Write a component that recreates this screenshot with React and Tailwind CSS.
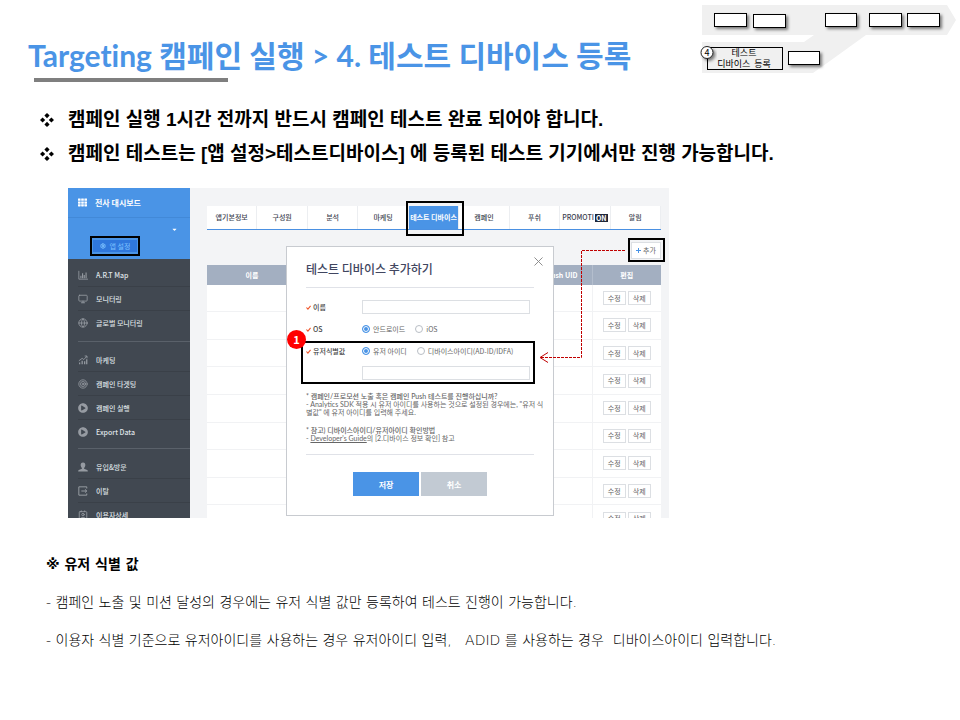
import React from "react";
import { Contact, Globe, Monitor, Settings, Target, X } from "lucide-react";
import { FaPlayCircle, FaTh, FaCaretDown } from "react-icons/fa";

const NODES = [
  [14, 13, 33],
  [53, 14, 33],
  [125, 13, 32],
  [169, 13, 33],
  [207, 13, 33],
  [88, 51, 32],
];

function ProcessMap() {
  return (
    <svg width="260" height="84" viewBox="0 0 260 84" className="shrink-0" role="img" aria-label="진행 단계">
      <defs>
        <filter id="shade" x="-20%" y="-20%" width="150%" height="180%">
          <feDropShadow dx="2" dy="2" stdDeviation="1.500" floodOpacity="0.5" />
        </filter>
      </defs>
      <path d="M2 5H247L256 20L247 35H166L123 66L113 73H2V42H104L114 35H2Z" fill="#f0f0f0" />
      {NODES.map(([x, y, w]) => (
        <rect key={x} x={x + 0.5} y={y + 0.5} width={w - 1} height="13" fill="#fff" stroke="#000" filter="url(#shade)" />
      ))}
      <rect x="7.5" y="47.5" width="75" height="22" fill="#f0f0f0" stroke="#000" />
      <g className="font-['Noto_Sans_CJK_KR',sans-serif]" fontSize="9" textAnchor="middle">
        <text x="44" y="56">테스트</text>
        <text x="44" y="67">디바이스&#160; 등록</text>
      </g>
      <circle cx="7" cy="52.5" r="6" fill="#fff" stroke="#222" filter="url(#shade)" />
      <text x="7" y="56" fontSize="9" textAnchor="middle" className="font-['Noto_Sans_CJK_KR',sans-serif]">4</text>
    </svg>
  );
}

function GrowthIcon({ className }) {
  return (
    <svg viewBox="0 0 12 12" className={className} fill="none" stroke="currentColor">
      <path d="M2 11V9M5 11V7M8 11V7.500M10.500 11V5" strokeWidth="1.500" />
      <path d="M1 7L5 4L7 5.500L10.500 1.500M8 1.200H10.800V4" />
    </svg>
  );
}

function AxisChartIcon({ className }) {
  return (
    <svg viewBox="0 0 12 12" className={className} fill="none" stroke="currentColor">
      <path d="M1 1V11H12" />
      <path d="M3.500 10V7M5.500 10V4M7.500 10V6M9.700 10V3" strokeWidth="1.300" />
    </svg>
  );
}

function PersonIcon({ className }) {
  return (
    <svg viewBox="0 0 12 12" className={className} fill="currentColor">
      <path d="M6 0.500C8 0.500 9 2 8.800 4C8.700 5.500 8 6.600 7.300 7.200V8.200L11 9.600C11.600 9.900 11.800 10.600 11.800 11.500H0.200C0.200 10.600 0.400 9.900 1 9.600L4.700 8.200V7.200C4 6.600 3.300 5.500 3.200 4C3 2 4 0.500 6 0.500Z" />
    </svg>
  );
}

function LeaveIcon({ className }) {
  return (
    <svg viewBox="0 0 12 12" className={className} fill="none" stroke="currentColor" strokeWidth="1.200">
      <path d="M10.500 3V1H1V11H10.500V9" />
      <path d="M4 6H10.500M8.300 4L10.500 6L8.300 8" />
    </svg>
  );
}

const MENU = [
  [
    ["A.R.T Map", AxisChartIcon],
    ["모니터링", Monitor],
    ["글로벌 모니터링", Globe],
  ],
  [
    ["마케팅", GrowthIcon],
    ["캠페인 타겟팅", Target],
    ["캠페인 실행", FaPlayCircle],
    ["Export Data", FaPlayCircle],
  ],
  [
    ["유입&방문", PersonIcon],
    ["이탈", LeaveIcon],
    ["이용자상세", Contact],
  ],
];

function Sidebar() {
  return (
    <nav className="w-[122px] shrink-0 bg-[#414851] text-[7px] leading-[10px] text-[#dfe2e6]">
      <div className="h-[71px] bg-[#4a94e6] text-white">
        <div className="flex h-[30px] items-center gap-2 border-b border-[#4289d8] pl-[10px] text-[8px] font-bold">
          <FaTh className="size-[9px]" />
          전사 대시보드
        </div>
        <div className="flex h-[22px] items-center justify-end pr-3">
          <FaCaretDown className="size-[7px]" />
        </div>
        <button className="ml-[25px] flex h-3 w-[44px] items-center justify-center gap-1 bg-[#2f77dc] text-[7px] leading-3 text-[#7cc0ff]">
          <Settings className="size-[6px]" strokeWidth={4} />앱 설정
        </button>
      </div>
      {MENU.map((group, i) => (
        <ul key={i} className={i === 0 ? "pt-1 pb-[6px]" : "ml-[10px] border-t border-[#5a616a] pt-[6px] pb-1"}>
          {group.map(([label, Icon], j) => (
            <li key={label} className={i === 0 ? "ml-[10px]" : ""}>
              <a
                href="#menu"
                className={
                  "flex h-6 items-center gap-2 font-medium " + (j < group.length - 1 ? "border-b border-[#3a4048]" : "")
                }
              >
                <Icon className="size-[10px] text-[#969ba2]" />
                {label}
              </a>
            </li>
          ))}
        </ul>
      ))}
    </nav>
  );
}

const TABS = ["앱기본정보", "구성원", "분석", "마케팅", "테스트 디바이스", "캠페인", "푸쉬", "PROMOTI", "알림"];

function Tabs() {
  return (
    <div className="grid h-6 grid-cols-9 border-b border-[#4a90e2] bg-white text-[7px] font-medium text-[#3d4350]">
      {TABS.map((tab) => (
        <button
          key={tab}
          className={
            "flex items-center justify-center border-r border-[#eceef1] whitespace-nowrap " +
            (tab === "테스트 디바이스" ? "bg-[#4a94e6] font-bold text-white" : "")
          }
        >
          {tab}
          {tab === "PROMOTI" && <span className="ml-px bg-[#20283a] px-px leading-[8px] font-bold text-white">ON</span>}
        </button>
      ))}
    </div>
  );
}

const ROWS = [1, 2, 3, 4, 5, 6, 7, 8, 9];

function DeviceTable() {
  return (
    <table className="mt-[6px] h-[268px] w-full table-fixed border-collapse bg-white text-[7px] leading-[9px]">
      <colgroup>
        <col className="w-[90px]" />
        <col />
        <col className="w-[70px]" />
        <col className="w-[69px]" />
      </colgroup>
      <thead>
        <tr className="h-5 bg-[#a3afc1] text-white">
          <th>이름</th>
          <th></th>
          <th className="pr-[14px] text-right">Push UID</th>
          <th className="border-l border-[#b4becd]">편집</th>
        </tr>
      </thead>
      <tbody>
        {ROWS.map((row) => (
          <tr key={row} className="border-b border-[#f1f2f4]">
            <td></td>
            <td></td>
            <td></td>
            <td className="border-l border-[#f1f2f4]">
              <div className="flex justify-center gap-[2px] text-[#666]">
                <button className="h-[14px] w-[23px] border border-[#dcdfe3] bg-white">수정</button>
                <button className="h-[14px] w-[23px] border border-[#dcdfe3] bg-white">삭제</button>
              </div>
            </td>
          </tr>
        ))}
      </tbody>
    </table>
  );
}

function Label({ htmlFor, children }) {
  const Tag = htmlFor ? "label" : "span";
  return (
    <Tag htmlFor={htmlFor} className="flex w-14 shrink-0 items-center gap-[2px] font-medium whitespace-nowrap text-[#444]">
      <svg viewBox="0 0 6 6" className="size-[5px]" fill="none" stroke="#f0562b" strokeWidth="1.300">
        <path d="M0.500 3L2.300 5L5.500 1" />
      </svg>
      {children}
    </Tag>
  );
}

function Radio({ name, label, checked }) {
  return (
    <label className="flex items-center gap-[3px] whitespace-nowrap">
      <input
        type="radio"
        name={name}
        defaultChecked={checked}
        className="size-2 shrink-0 appearance-none rounded-full border border-[#b9bec5] bg-white checked:border-[#4a94e6] checked:bg-[#4a94e6] checked:shadow-[inset_0_0_0_1px_#fff]"
      />
      {label}
    </label>
  );
}

const FIELD = "h-[14px] w-[168px] border border-[#dcdfe3] bg-white outline-none";

function AddDeviceDialog() {
  return (
    <form
      role="dialog"
      aria-label="테스트 디바이스 추가하기"
      className="absolute top-[58px] left-[218px] h-[270px] w-[268px] border border-[#c8cbd0] bg-white px-[19px] text-[7px] leading-[9px] text-[#666]"
    >
      <div className="flex h-[41px] items-center justify-between border-b border-[#e0e2e8] pt-1">
        <h2 className="text-[12px] leading-4 font-medium text-[#414660]">테스트 디바이스 추가하기</h2>
        <button type="button" aria-label="닫기" className="-mt-4 -mr-3">
          <X className="size-[15px] text-[#888]" strokeWidth={1.5} />
        </button>
      </div>
      <div className="mt-2 flex h-[22px] items-center">
        <Label htmlFor="device">이름</Label>
        <input id="device" className={FIELD} />
      </div>
      <div className="flex h-[22px] items-center">
        <Label>OS</Label>
        <div className="flex gap-[10px]">
          <Radio name="os" label="안드로이드" checked />
          <Radio name="os" label="iOS" />
        </div>
      </div>
      <div className="flex h-[22px] items-center">
        <Label htmlFor="uid">유저식별값</Label>
        <div className="flex gap-[10px]">
          <Radio name="kind" label="유저 아이디" checked />
          <Radio name="kind" label="디바이스아이디(AD-ID/IDFA)" />
        </div>
      </div>
      <div className="flex h-[22px] items-center pl-14">
        <input id="uid" className={FIELD} />
      </div>
      <div className="mt-2 font-[Lato,'Noto_Sans_CJK_KR',sans-serif] leading-[8px] whitespace-nowrap">
        <p className="font-medium">* 캠페인/프로모션 노출 혹은 캠페인 Push 테스트를 진행하십니까?</p>
        <p>- Analytics SDK 적용 시 유저 아이디를 사용하는 것으로 설정된 경우에는, "유저 식</p>
        <p>별값" 에 유저 아이디를 입력해 주세요.</p>
        <p className="mt-[10px] font-medium">* 참고) 디바이스아이디/유저아이디 확인방법</p>
        <p>
          - <a href="#guide" className="underline">Developer's Guide</a>의 [2.디바이스 정보 확인] 참고
        </p>
      </div>
      <div className="mt-3 flex justify-center gap-[2px] border-t border-[#e0e2e8] pt-[17px] text-[8px] font-bold text-white">
        <button type="button" className="h-6 w-[66px] bg-[#4a94e6]">저장</button>
        <button type="button" className="h-6 w-[66px] bg-[#c2cad3]">취소</button>
      </div>
    </form>
  );
}

function Annotations() {
  return (
    <div className="pointer-events-none">
      <div className="absolute top-[48px] left-[22px] h-5 w-[50px] border-2 border-black" />
      <div className="absolute top-[13px] left-[338px] h-[35px] w-[58px] border-2 border-black" />
      <div className="absolute top-[50px] left-[560px] h-6 w-[37px] border-2 border-black" />
      <div className="absolute top-[153px] left-[233px] h-[43px] w-[234px] border-2 border-black" />
      <div className="absolute top-[142px] left-[219px] flex size-[19px] items-center justify-center rounded-full bg-[#f00] text-[11px] font-bold text-white">
        1
      </div>
      <svg width="90" height="122" viewBox="0 0 90 122" className="absolute top-[55px] left-[469px]" fill="none" stroke="#c00000">
        <path d="M88 7.500H44.500V114.500H3" strokeDasharray="3 1" />
        <path d="M11 109.500L3 114.500L11 119.500" />
      </svg>
    </div>
  );
}

function ConsoleShot() {
  return (
    <section className="relative mt-[17px] ml-[68px] flex h-[330px] w-[601px] max-w-full overflow-hidden bg-[#f3f4f6]">
      <Sidebar />
      <div className="min-w-0 flex-1 pt-[18px] pr-2 pl-[17px]">
        <Tabs />
        <div className="mt-3 flex justify-end">
          <button className="flex h-[17px] w-[30px] items-center justify-center gap-[2px] border border-[#dcdfe3] bg-white text-[7px] text-[#666]">
            <svg viewBox="0 0 5 5" className="size-[5px]" stroke="#4a94e6">
              <path d="M2.500 0V5M0 2.500H5" />
            </svg>
            추가
          </button>
        </div>
        <DeviceTable />
      </div>
      <AddDeviceDialog />
      <Annotations />
    </section>
  );
}

function Bullet({ children }) {
  return (
    <li className="flex items-center gap-[14px]">
      <svg viewBox="0 0 14 14" className="size-[14px] shrink-0">
        <path d="M7 0L9.600 2.600L7 5.200L4.400 2.600ZM7 8.800L9.600 11.400L7 14L4.400 11.400ZM2.600 4.400L5.200 7L2.600 9.600L0 7ZM11.400 4.400L14 7L11.400 9.600L8.800 7Z" />
      </svg>
      {children}
    </li>
  );
}

export default function App() {
  return (
    <main className="min-h-screen bg-white pb-10 font-['Noto_Sans_CJK_KR','Noto_Sans',sans-serif] text-black">
      <header className="flex items-start justify-between">
        <div className="pt-8 pl-7">
          <h1 className="font-[Lato,'Noto_Sans_CJK_KR',sans-serif] text-[30px] leading-[46px] font-bold whitespace-nowrap text-[#4a94e6] [font-variant-ligatures:none]">
            Targeting 캠페인 실행 &gt; 4. 테스트 디바이스 등록
          </h1>
          <div className="ml-[6px] h-1 w-[194px] bg-[#7f7f7f]" />
        </div>
        <ProcessMap />
      </header>
      <ul className="mt-[19px] pl-10 font-['Liberation_Sans','Noto_Sans_CJK_KR',sans-serif] text-[19px] leading-[34px] font-bold">
        <Bullet>캠페인 실행 1시간 전까지 반드시 캠페인 테스트 완료 되어야 합니다.</Bullet>
        <Bullet>캠페인 테스트는 [앱 설정&gt;테스트디바이스] 에 등록된 테스트 기기에서만 진행 가능합니다.</Bullet>
      </ul>
      <ConsoleShot />
      <section className="mt-[27px] pl-[46px] font-['DejaVu_Sans','Noto_Sans_CJK_KR',sans-serif] text-[14px] leading-[38px] font-light">
        <h2 className="font-bold">※ 유저 식별 값</h2>
        <p>- 캠페인 노출 및 미션 달성의 경우에는 유저 식별 값만 등록하여 테스트 진행이 가능합니다.</p>
        <p>- 이용자 식별 기준으로 유저아이디를 사용하는 경우 유저아이디 입력,&nbsp;&nbsp; ADID 를 사용하는 경우&nbsp; 디바이스아이디 입력합니다.</p>
      </section>
    </main>
  );
}
